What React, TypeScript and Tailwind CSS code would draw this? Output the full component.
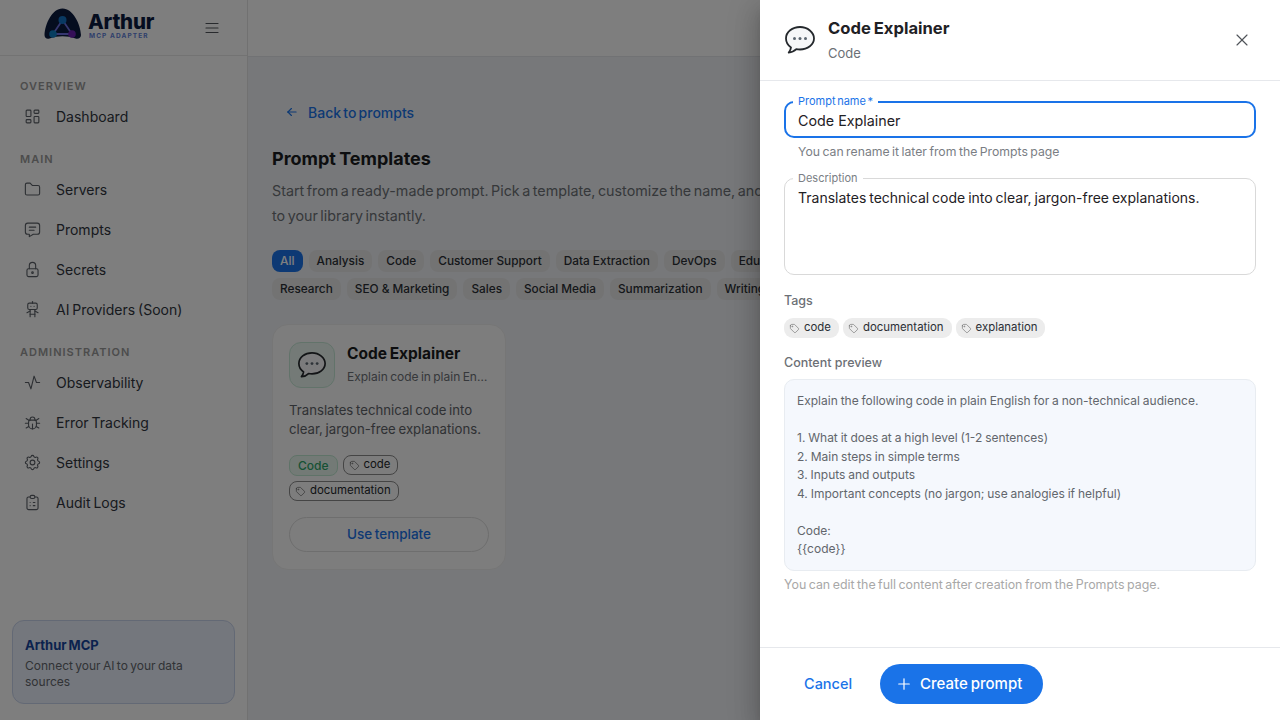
import type { ComponentType } from "react";
import {
  TbActivity,
  TbArrowLeft,
  TbBug,
  TbClipboardList,
  TbFolder,
  TbLayoutDashboard,
  TbLock,
  TbMenu2,
  TbMessage,
  TbPlus,
  TbRobot,
  TbSettings,
  TbTag,
  TbX,
} from "react-icons/tb";

type NavItem = { label: string; icon: ComponentType<{ size?: number; strokeWidth?: number; className?: string }> };

const nav: { title: string; items: NavItem[] }[] = [
  { title: "OVERVIEW", items: [{ label: "Dashboard", icon: TbLayoutDashboard }] },
  {
    title: "MAIN",
    items: [
      { label: "Servers", icon: TbFolder },
      { label: "Prompts", icon: TbMessage },
      { label: "Secrets", icon: TbLock },
      { label: "AI Providers (Soon)", icon: TbRobot },
    ],
  },
  {
    title: "ADMINISTRATION",
    items: [
      { label: "Observability", icon: TbActivity },
      { label: "Error Tracking", icon: TbBug },
      { label: "Settings", icon: TbSettings },
      { label: "Audit Logs", icon: TbClipboardList },
    ],
  },
];

const chipsRowOne = ["Analysis", "Code", "Customer Support", "Data Extraction", "DevOps", "Education"];
const chipsRowTwo = ["Research", "SEO & Marketing", "Sales", "Social Media", "Summarization", "Writing"];

const previewLines = [
  "Explain the following code in plain English for a non-technical audience.",
  "",
  "1. What it does at a high level (1-2 sentences)",
  "2. Main steps in simple terms",
  "3. Inputs and outputs",
  "4. Important concepts (no jargon; use analogies if helpful)",
  "",
  "Code:",
  "{{code}}",
];

function Balloon({ size }: { size: number }) {
  return (
    <svg width={size} height={size} viewBox="0 0 32 32" fill="none">
      <path
        d="M16 3C8.300 3 2 8 2 14.500c0 3.600 2 6.800 5 8.900-.2 1.900-1 3.600-2.300 5.100 3-.2 5.700-1.500 7.600-3.400 1.200.3 2.400.4 3.700.4 7.700 0 14-5 14-11S23.700 3 16 3z"
        fill="#f6f7f8"
        stroke="#24282c"
        strokeWidth="1.800"
        strokeLinejoin="round"
      />
      <circle cx="10.500" cy="14.500" r="1.500" fill="#5c6670" />
      <circle cx="16" cy="14.500" r="1.500" fill="#5c6670" />
      <circle cx="21.500" cy="14.500" r="1.500" fill="#5c6670" />
    </svg>
  );
}

function Logo() {
  return (
    <div className="flex items-start gap-[6px] pb-[8px]">
      <svg width="38" height="32" viewBox="0 0 38 32" fill="none">
        <path
          d="M0.500 27C1 16 8 0.500 18.500 0.500S36.500 16 37 27c.1 3-3 4.500-5.500 3.500-8-3-18-3-26 0C3 31.500.4 30 .5 27z"
          fill="#0b1a3f"
        />
        <path d="M18.500 12L9 26h19z" stroke="#6d6fe0" strokeWidth="1.800" fill="#0b1a3f" />
        <circle cx="18.500" cy="12" r="4" fill="#1273c4" />
        <circle cx="9" cy="26" r="3.800" fill="#0f7cc0" />
        <circle cx="28" cy="26" r="3.800" fill="#6a1fb0" />
      </svg>
      <div className="flex flex-col pt-[4px]">
        <span className="text-[20.500px] leading-[20px] font-extrabold tracking-[-0.2px] text-[#0b1a3f]">Arthur</span>
        <span className="pl-[1px] text-[6.500px] leading-[8px] font-bold tracking-[1.100px] text-[#5f7fd8]">MCP ADAPTER</span>
      </div>
    </div>
  );
}

function Sidebar() {
  return (
    <aside className="flex h-full w-[248px] shrink-0 flex-col border-r border-[#e3e3e3] bg-[#fcfcfc]">
      <div className="flex h-[56px] shrink-0 items-center justify-between border-b border-[#e6e6e6] pl-[44px] pr-[26px]">
        <Logo />
        <TbMenu2 size={18} strokeWidth={1.500} className="text-[#50545a]" />
      </div>
      <nav className="flex flex-col px-[12px] pt-[8px]">
        {nav.map((section) => (
          <div key={section.title} className="flex flex-col pt-[13px]">
            <div className="mb-[2px] h-[18px] px-[8px] text-[11px] leading-[18px] font-semibold tracking-[1px] text-[#999999]">
              {section.title}
            </div>
            {section.items.map((item) => (
              <div key={item.label} className="flex h-[40px] items-center gap-[14px] pb-[2px] pl-[11px] text-[14px] font-normal text-[#30353c]">
                <item.icon size={19} strokeWidth={1.400} className="text-[#5a5f66]" />
                <span className="[word-spacing:-1px]">{item.label}</span>
              </div>
            ))}
          </div>
        ))}
      </nav>
      <div className="mx-[12px] mb-[16px] mt-auto h-[84px] rounded-[12px] border border-[#c7d2ea] bg-[#e9effa] px-[12px] pt-[14px]">
        <div className="text-[13px] leading-[20px] font-bold text-[#16449c] [word-spacing:-1px]">Arthur MCP</div>
        <div className="mt-[3px] text-[12px] leading-[16px] text-[#62666c] [word-spacing:-1px]">Connect your AI to your data sources</div>
      </div>
    </aside>
  );
}

function Chip({ label, active }: { label: string; active?: boolean }) {
  return (
    <span
      className={
        active
          ? "shrink-0 rounded-[8px] bg-[#1a73e8] px-[8px] text-[12px] leading-[22px] font-medium text-white"
          : "shrink-0 rounded-[8px] bg-[#e7e7e7] px-[8px] text-[11.800px] leading-[22px] font-medium text-[#2b2f35]"
      }
    >
      {label}
    </span>
  );
}

function OutlineTag({ label }: { label: string }) {
  return (
    <span className="flex h-[20px] items-center gap-[4px] rounded-[8px] border border-[#8a8a8a] pl-[5px] pr-[7px] text-[11.400px] font-normal text-[#24282c]">
      <TbTag size={11} strokeWidth={1.500} className="text-[#666]" />
      {label}
    </span>
  );
}

function TemplateCard() {
  return (
    <div className="w-[234px] rounded-[16px] border border-[#ececec] bg-[#fafafa] px-[16px] pt-[17px] pb-[17px]">
      <div className="flex items-center gap-[12px]">
        <div className="flex h-[46px] w-[46px] shrink-0 items-center justify-center rounded-[12px] border border-[#c5e6d5] bg-[#e8f5ee]">
          <Balloon size={30} />
        </div>
        <div className="min-w-0 pb-[2px]">
          <div className="text-[15.500px] leading-[22px] font-bold text-[#1a1c20] [word-spacing:-1px]">Code Explainer</div>
          <div className="mt-[3px] truncate text-[12px] leading-[18px] text-[#6c7076] [word-spacing:-1px]">Explain code in plain English</div>
        </div>
      </div>
      <p className="mt-[13px] text-[13.200px] leading-[19px] text-[#5f6368] [word-spacing:-1px]">
        Translates technical code into clear, jargon-free explanations.
      </p>
      <div className="mt-[16px] flex flex-wrap gap-x-[5px] gap-y-[5px]">
        <span className="h-[21px] rounded-[8px] border border-[#bfe6d0] bg-[#e6f5ec] px-[8px] text-[12px] leading-[19px] font-medium text-[#2fa36b]">Code</span>
        <OutlineTag label="code" />
        <OutlineTag label="documentation" />
      </div>
      <button className="mt-[16px] h-[35px] w-full rounded-full border border-[#dcdcdc] text-[13.500px] font-medium text-[#1a73e8] [word-spacing:-1px]">
        Use template
      </button>
    </div>
  );
}

function Main() {
  return (
    <div className="flex h-full min-w-0 flex-1 flex-col bg-[#eff1f5]">
      <div className="h-[57px] shrink-0 border-b border-[#e3e5e8] bg-[#fcfcfc]" />
      <main className="px-[24px] pt-[43px]">
        <div className="flex h-[24px] items-center gap-[9px] pl-[13px] text-[14px] font-medium text-[#1a73e8]">
          <TbArrowLeft size={14} strokeWidth={2} />
          <span className="[word-spacing:-1.500px]">Back to prompts</span>
        </div>
        <h1 className="mt-[21px] text-[18px] leading-[28px] font-bold text-[#1a1c20] [word-spacing:-1px]">Prompt Templates</h1>
        <p className="mt-[5px] w-[560px] whitespace-nowrap text-[14.300px] leading-[25px] text-[#6c7076] [word-spacing:-1.500px]">
          Start from a ready-made prompt. Pick a template, customize the name, and add it
          <br />
          to your library instantly.
        </p>
        <div className="mt-[22px] flex gap-[6px] whitespace-nowrap">
          <Chip label="All" active />
          {chipsRowOne.map((c) => (
            <Chip key={c} label={c} />
          ))}
        </div>
        <div className="mt-[6px] flex gap-[6px] whitespace-nowrap">
          {chipsRowTwo.map((c) => (
            <Chip key={c} label={c} />
          ))}
        </div>
        <div className="mt-[24px]">
          <TemplateCard />
        </div>
      </main>
    </div>
  );
}

function Drawer() {
  return (
    <div className="absolute inset-y-0 right-0 flex w-[520px] flex-col bg-white shadow-[0_8px_10px_-5px_rgba(0,0,0,0.2),0_16px_24px_2px_rgba(0,0,0,0.14),0_6px_30px_5px_rgba(0,0,0,0.12)]">
      <header className="flex h-[81px] shrink-0 items-center border-b border-[#e6e8ec] pl-[24px] pr-[28px]">
        <Balloon size={32} />
        <div className="ml-[12px] -mt-[3px]">
          <div className="text-[16.600px] leading-[26px] font-bold text-[#1f2125] [word-spacing:-1px]">Code Explainer</div>
          <div className="mt-[3px] text-[13px] leading-[18px] text-[#6c7076]">Code</div>
        </div>
        <TbX size={20} strokeWidth={1.400} className="ml-auto text-[#50545a]" />
      </header>

      <div className="flex min-h-0 flex-1 flex-col px-[24px] pt-[20px]">
        <div className="relative">
          <label className="absolute -top-[7px] left-[9px] bg-white px-[5px] text-[11px] leading-[14px] text-[#1a73e8] [word-spacing:-1.500px]">
            Prompt name *
          </label>
          <input
            readOnly
            value="Code Explainer"
            className="block h-[37px] w-full rounded-[10px] border-2 border-[#1a73e8] pl-[12px] pt-[2px] text-[14.300px] text-[#1f2125] outline-none"
          />
        </div>
        <div className="mt-[5px] pl-[14px] text-[12.250px] leading-[18px] text-[#7a7e84] [word-spacing:-1px]">
          You can rename it later from the Prompts page
        </div>

        <div className="relative mt-[17px]">
          <label className="absolute -top-[7px] left-[9px] bg-white px-[5px] text-[11px] leading-[14px] text-[#7a7e84]">Description</label>
          <textarea
            readOnly
            value="Translates technical code into clear, jargon-free explanations."
            className="block h-[97px] w-full resize-none rounded-[10px] border border-[#d9d9d9] px-[13px] pt-[9px] text-[14px] leading-[20px] text-[#1f2125] outline-none [word-spacing:-1px]"
          />
        </div>

        <div className="mt-[17px] text-[12.500px] leading-[18px] font-medium text-[#6c7076]">Tags</div>
        <div className="mt-[8px] flex gap-[4px]">
          {["code", "documentation", "explanation"].map((t) => (
            <span key={t} className="flex h-[20px] items-center gap-[4px] rounded-[9px] bg-[#ececec] pl-[5px] pr-[8px] text-[11.400px] font-normal text-[#2b2f35]">
              <TbTag size={11} strokeWidth={1.500} className="text-[#777]" />
              {t}
            </span>
          ))}
        </div>

        <div className="mt-[16px] text-[12.500px] leading-[18px] font-medium text-[#6c7076]">Content preview</div>
        <div className="mt-[7px] h-[192px] rounded-[10px] border border-[#e8ecf1] bg-[#f5f8fd] px-[12px] pt-[12px] text-[12px] leading-[18.500px] text-[#62666c] [word-spacing:-0.500px]">
          {previewLines.map((line, i) => (
            <div key={i} className="h-[18.500px]">{line}</div>
          ))}
        </div>
        <div className="mt-[5px] text-[12.400px] leading-[18px] text-[#a8a8a8] [word-spacing:-1px]">
          You can edit the full content after creation from the Prompts page.
        </div>
      </div>

      <footer className="flex h-[73px] shrink-0 items-center border-t border-[#e6e8ec] pl-[44px]">
        <button className="w-[48px] text-left text-[14.500px] font-medium whitespace-nowrap text-[#1a73e8]">Cancel</button>
        <button className="ml-[28px] flex h-[40px] w-[163px] items-center gap-[7px] rounded-full bg-[#1a73e8] pl-[15px] text-[15px] font-medium text-white [word-spacing:-1px]">
          <TbPlus size={18} strokeWidth={1.600} />
          Create prompt
        </button>
      </footer>
    </div>
  );
}

export default function App() {
  return (
    <div className="relative flex h-[720px] w-[1280px] overflow-hidden font-['Inter',sans-serif]">
      <Sidebar />
      <Main />
      <div className="absolute inset-0 bg-black/50" />
      <Drawer />
    </div>
  );
}
